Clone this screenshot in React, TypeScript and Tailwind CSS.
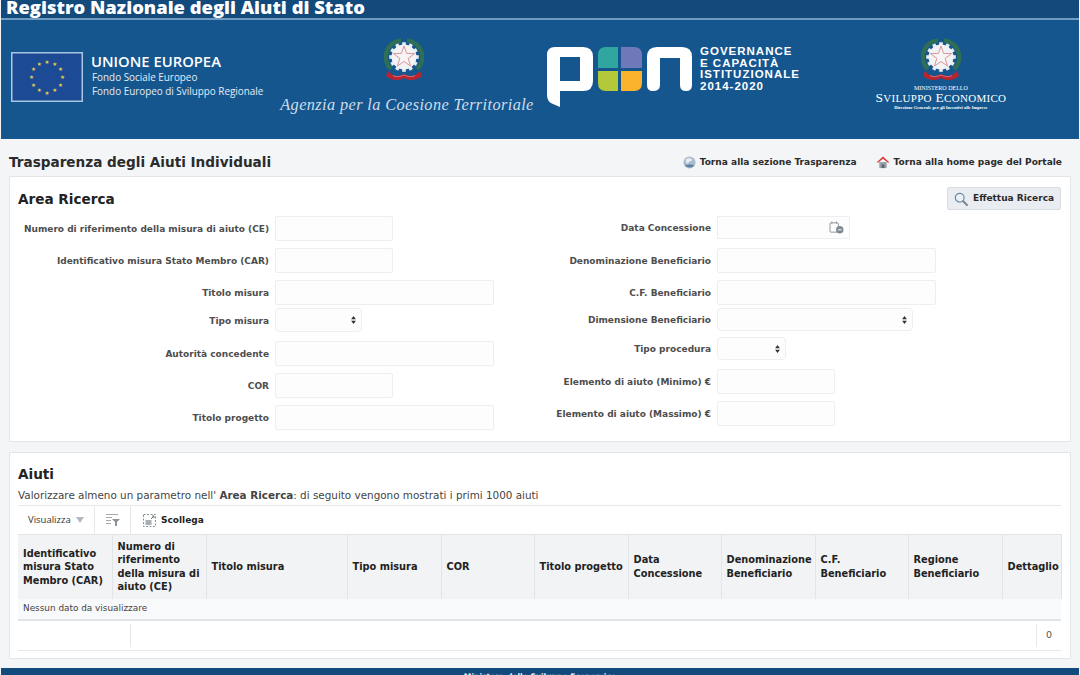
import React from 'react';

const verdana = "font-['DejaVu_Sans',sans-serif]";

function Emblem({ className }: { className: string }) {
  const teeth = Array.from({ length: 12 }, (_, i) => i * 30);
  return (
    <svg viewBox="0 0 40 46" className={className}>
      <path d="M17 2.5 A16.5 16.5 0 0 0 7 31" fill="none" stroke="#2e6f55" strokeWidth="4.5" />
      <path d="M23 2.5 A16.5 16.5 0 0 1 33 31" fill="none" stroke="#2e6f55" strokeWidth="4.5" />
      {teeth.map((a) => (
        <rect key={a} x="18.2" y="4.2" width="3.6" height="3.2" fill="#e6ebee" transform={`rotate(${a} 20 19)`} />
      ))}
      <circle cx="20" cy="19" r="12.5" fill="#f1f3f4" />
      <polygon
        points="20,8 22.6,15.4 30.5,15.6 24.2,20.4 26.5,28 20,23.5 13.5,28 15.8,20.4 9.5,15.6 17.4,15.4"
        fill="#f6f4f4"
        stroke="#d98a92"
        strokeWidth="0.9"
      />
      <path d="M4 33 C9 39 15 39 20 36 C25 39 31 39 36 33 L38 38 C32 43 25 43 20 40 C15 43 8 43 2 38 Z" fill="#b8242f" />
      <path d="M9 37.5 C13 39.5 16 38.5 20 37 C24 38.5 27 39.5 31 37.5" fill="none" stroke="#e9a0a0" strokeWidth="0.6" />
    </svg>
  );
}

function EuFlag() {
  const stars = Array.from({ length: 12 }, (_, i) => {
    const a = (i * Math.PI) / 6;
    return { x: 36 + 15.5 * Math.sin(a), y: 25 - 15.5 * Math.cos(a), key: i };
  });
  return (
    <svg viewBox="0 0 72 50" className="w-[72px] h-[50px] shrink-0">
      <rect x="0.75" y="0.75" width="70.5" height="48.5" fill="#1d4a94" stroke="#a9c6e3" strokeWidth="1.5" />
      {stars.map((s) => (
        <text key={s.key} x={s.x} y={s.y + 2} textAnchor="middle" fontSize="5.5" fill="#e8d24a" fontFamily="DejaVu Sans">
          ★
        </text>
      ))}
    </svg>
  );
}

function PonLogo() {
  return (
    <svg viewBox="0 0 146 60" className="w-[146px] h-[60px] shrink-0">
      <path
        d="M8 0 H36 Q46 0 46 10 V34 Q46 44 36 44 H13 V60 L6 57 Q0 55 0 48 V8 Q0 0 8 0 Z M13 10 V34 H33 V10 Z"
        fill="#fff"
        fillRule="evenodd"
      />
      <path d="M51 22 V8 Q51 0 59 0 H71 V21 H51 Z" fill="#2fa6a0" />
      <path d="M74 0 H87 Q95 0 95 8 V21 H74 Z" fill="#6f78b8" />
      <path d="M51 24 H71 V44 H59 Q51 44 51 36 Z" fill="#b3c93a" />
      <path d="M74 24 H95 V36 Q95 44 87 44 H74 Z" fill="#fbb32d" />
      <path
        d="M100 38 V10 Q100 0 110 0 H135 Q145 0 145 10 V38 Q145 44 139 44 Q133 44 133 38 V11 H113 V38 Q113 44 106 44 Q100 44 100 38 Z"
        fill="#fff"
      />
    </svg>
  );
}

function Field({ label, inputClass, rowClass }: { label: string; inputClass: string; rowClass: string }) {
  return (
    <div className={`flex items-center ${rowClass}`}>
      <label className="w-[251px] shrink-0 pr-[6px] pt-[1px] text-right text-[9px] font-bold leading-none text-[#4d4d4d] whitespace-nowrap">
        {label}
      </label>
      <input className={`h-full shrink-0 bg-[#fdfdfe] border border-[#eceef1] rounded-[2px] ${inputClass}`} />
    </div>
  );
}

function SelectField({ label, selectClass, rowClass }: { label: string; selectClass: string; rowClass: string }) {
  return (
    <div className={`flex items-center ${rowClass}`}>
      <label className="w-[251px] shrink-0 pr-[6px] pt-[2px] text-right text-[9px] font-bold leading-none text-[#4d4d4d] whitespace-nowrap">
        {label}
      </label>
      <div className={`h-full flex items-center justify-end pr-[5px] bg-[#fdfdfe] border border-[#eceef1] rounded-[4px] ${selectClass}`}>
        <svg viewBox="0 0 6 10" className="w-[5px] h-[8px]">
          <path d="M3 0 L6 4 H0 Z M0 6 H6 L3 10 Z" fill="#333" />
        </svg>
      </div>
    </div>
  );
}

const headers = [
  { text: 'Identificativo misura Stato Membro (CAR)', w: 'w-[94px]' },
  { text: 'Numero di riferimento della misura di aiuto (CE)', w: 'w-[94px]' },
  { text: 'Titolo misura', w: 'w-[141px]' },
  { text: 'Tipo misura', w: 'w-[94px]' },
  { text: 'COR', w: 'w-[93px]' },
  { text: 'Titolo progetto', w: 'w-[94px]' },
  { text: 'Data Concessione', w: 'w-[93px]' },
  { text: 'Denominazione Beneficiario', w: 'w-[94px]' },
  { text: 'C.F. Beneficiario', w: 'w-[93px]' },
  { text: 'Regione Beneficiario', w: 'w-[94px]' },
  { text: 'Dettaglio', w: 'w-[59px]' },
];

export default function App() {
  return (
    <div className={`h-[675px] overflow-hidden bg-[#f4f5f6] px-[1px] text-[#222] ${verdana}`}>
      {/* barra titolo */}
      <div className="h-[20px] bg-[#134a7c] border-b-2 border-[#6f9cc0] overflow-hidden pl-[5px]">
        <div className="font-['Open_Sans',sans-serif] font-extrabold text-[18.4px] leading-[13px] text-white whitespace-nowrap">
          Registro Nazionale degli Aiuti di Stato
        </div>
      </div>

      {/* loghi */}
      <div className="h-[119px] bg-[#15568f] flex items-start pl-[10px]">
        <div className="mt-[32px]">
          <EuFlag />
        </div>
        <div className="ml-[8px] mt-[32px] w-[188px] font-['Open_Sans',sans-serif] text-white">
          <div className="text-[14.8px] font-semibold leading-[18px]">UNIONE EUROPEA</div>
          <div className="pl-[1px] mt-[1px] text-[9.9px] leading-[13.5px] text-[#e4edf5]">Fondo Sociale Europeo</div>
          <div className="pl-[1px] text-[9.9px] leading-[13.5px] text-[#e4edf5]">Fondo Europeo di Sviluppo Regionale</div>
        </div>
        <div className="w-[256px] flex flex-col items-center mt-[18px]">
          <Emblem className="w-[40px] h-[46px] ml-[-6px]" />
          <div className="mt-[11px] font-['Liberation_Serif',serif] italic text-[16.3px] leading-[20px] tracking-[0.4px] text-[#cfdde9] whitespace-nowrap">
            Agenzia per la Coesione Territoriale
          </div>
        </div>
        <div className="ml-[12px] mt-[27px]">
          <PonLogo />
        </div>
        <div className="ml-[7px] mt-[26px] font-['Liberation_Sans',sans-serif] font-bold text-[11.5px] leading-[11.5px] tracking-[1px] text-white whitespace-nowrap">
          <div>GOVERNANCE</div>
          <div>E CAPACITÀ</div>
          <div>ISTITUZIONALE</div>
          <div>2014-2020</div>
        </div>
        <div className="w-[132px] ml-[75px] mt-[18px] flex flex-col items-center font-['Liberation_Serif',serif] text-white">
          <Emblem className="w-[40px] h-[46px]" />
          <div className="text-[6px] leading-[6px] mt-[1px] whitespace-nowrap">MINISTERO DELLO</div>
          <div className="text-[13.5px] leading-[14px] tracking-[0.3px] whitespace-nowrap">
            S<span className="text-[11px]">VILUPPO</span> E<span className="text-[11px]">CONOMICO</span>
          </div>
          <div className="text-[4.5px] leading-[6px] font-bold whitespace-nowrap">
            Direzione Generale per gli Incentivi alle Imprese
          </div>
        </div>
      </div>

      {/* titolo pagina */}
      <div className="h-[37px] flex items-center justify-between pl-[8px] pr-[17px] pt-[10px]">
        <h1 className="text-[13.6px] font-bold leading-none text-[#2b2b2b]">Trasparenza degli Aiuti Individuali</h1>
        <div className="flex items-center text-[9.05px] font-bold text-[#2b2b2b]">
          <svg viewBox="0 0 14 14" className="w-[13px] h-[13px]">
            <circle cx="7" cy="7" r="6.5" fill="#a9bccf" />
            <path d="M3 4 C5 2 8 2 10 4 C9 6 7 5 6 7 C5 9 3 8 3 4 Z" fill="#e6ecf1" />
            <path d="M2 10 C5 13 10 13 12 10 C10 9 5 9 2 10 Z" fill="#5f80a3" />
          </svg>
          <span className="ml-[4px]">Torna alla sezione Trasparenza</span>
          <svg viewBox="0 0 14 14" className="ml-[19px] w-[14px] h-[13px]">
            <rect x="3" y="6.5" width="8" height="6.5" fill="#9aa3ab" />
            <rect x="5.5" y="9" width="3" height="4" fill="#5f676e" />
            <path d="M7 0.5 L14 7 H12 L7 3 L2 7 H0 Z" fill="#d8392e" />
          </svg>
          <span className="ml-[4px]">Torna alla home page del Portale</span>
        </div>
      </div>

      {/* area ricerca */}
      <section className="relative mx-[8px] h-[266px] bg-white border border-[#e3e6e9]">
        <div className="flex items-center justify-between h-[33px] pl-[8px] pr-[9px] pt-[9px]">
          <h2 className="text-[13.6px] font-bold leading-none text-[#222] pt-[4px]">Area Ricerca</h2>
          <button className="w-[114px] h-[23px] mt-[1px] flex items-center pl-[6px] bg-[#e9edf1] border border-[#d9dee3] rounded-[2px] text-[9px] font-bold text-[#2b2b2b]">
            <svg viewBox="0 0 16 16" className="w-[14px] h-[14px]">
              <circle cx="6.5" cy="6.5" r="5" fill="#eaf1f7" stroke="#6f8ba3" strokeWidth="1.4" />
              <path d="M10.5 10.5 L15 15" stroke="#7b8790" strokeWidth="2.4" strokeLinecap="round" />
            </svg>
            <span className="ml-[5px] pt-[1px]">Effettua Ricerca</span>
          </button>
        </div>

        <div className="flex mt-[6px]">
          <div className="w-[442px] pl-[14px]">
            <Field label="Numero di riferimento della misura di aiuto (CE)" inputClass="w-[118px]" rowClass="h-[25px]" />
            <Field label="Identificativo misura Stato Membro (CAR)" inputClass="w-[118px]" rowClass="h-[25px] mt-[7px]" />
            <Field label="Titolo misura" inputClass="w-[219px]" rowClass="h-[25px] mt-[7px]" />
            <SelectField label="Tipo misura" selectClass="w-[87px]" rowClass="h-[24px] mt-[3px]" />
            <Field label="Autorità concedente" inputClass="w-[219px]" rowClass="h-[25px] mt-[9px]" />
            <Field label="COR" inputClass="w-[118px]" rowClass="h-[25px] mt-[7px]" />
            <Field label="Titolo progetto" inputClass="w-[219px]" rowClass="h-[25px] mt-[7px]" />
          </div>
          <div className="pl-[14px]">
            <div className="flex items-center h-[23px]">
              <label className="w-[251px] pr-[6px] pt-[1px] text-right text-[9px] font-bold leading-none text-[#4d4d4d]">
                Data Concessione
              </label>
              <div className="w-[133px] h-full flex items-center justify-end pr-[5px] bg-[#fdfdfe] border border-[#eceef1]">
                <svg viewBox="0 0 16 14" className="w-[15px] h-[13px]">
                  <rect x="1" y="2" width="9" height="10" rx="1" fill="none" stroke="#8a9299" strokeWidth="1" />
                  <path d="M3 0.5 V3 M8 0.5 V3" stroke="#8a9299" />
                  <circle cx="11.5" cy="9.5" r="4" fill="#7f8b94" />
                  <path d="M9.5 9.5 H13.5" stroke="#fff" />
                </svg>
              </div>
            </div>
            <Field label="Denominazione Beneficiario" inputClass="w-[219px]" rowClass="h-[25px] mt-[9px]" />
            <Field label="C.F. Beneficiario" inputClass="w-[219px]" rowClass="h-[25px] mt-[7px]" />
            <SelectField label="Dimensione Beneficiario" selectClass="w-[196px]" rowClass="h-[23px] mt-[3px]" />
            <SelectField label="Tipo procedura" selectClass="w-[69px]" rowClass="h-[23px] mt-[6px]" />
            <Field label="Elemento di aiuto (Minimo) €" inputClass="w-[118px]" rowClass="h-[25px] mt-[9px]" />
            <Field label="Elemento di aiuto (Massimo) €" inputClass="w-[118px]" rowClass="h-[25px] mt-[7px]" />
          </div>
        </div>
      </section>

      {/* aiuti */}
      <section className="mx-[8px] mt-[10px] h-[207px] bg-white border border-[#e3e6e9] pl-[8px] pr-[9px]">
        <h2 className="mt-[13px] text-[13.6px] font-bold leading-[16px] text-[#222]">Aiuti</h2>
        <p className="mt-[6px] h-[18px] border-b border-[#e6e8ea] text-[10.4px] leading-[14px] text-[#444] whitespace-nowrap">
          Valorizzare almeno un parametro nell' <b>Area Ricerca</b>: di seguito vengono mostrati i primi 1000 aiuti
        </p>

        <div className="h-[28px] flex items-center">
          <div className="w-[77px] h-full flex items-center pl-[10px] border-r border-[#e6e8ea] font-['Open_Sans',sans-serif] text-[9.5px] text-[#333]">
            Visualizza
            <span className="ml-[5px] w-0 h-0 border-x-[4px] border-x-transparent border-t-[6px] border-t-[#b5b9bd]" />
          </div>
          <div className="w-[36px] h-full flex items-center justify-center border-r border-[#e6e8ea]">
            <svg viewBox="0 0 14 12" className="w-[14px] h-[12px]">
              <path d="M0 0.5 H12 M0 3.5 H6 M0 6.5 H5 M0 9.5 H5" stroke="#a3abb1" strokeWidth="1.2" />
              <path d="M6 5 H14 L11 8 V12 H9 V8 Z" fill="#8b949b" />
            </svg>
          </div>
          <svg viewBox="0 0 13 13" className="ml-[12px] w-[13px] h-[13px]">
            <rect x="0.5" y="0.5" width="12" height="12" fill="none" stroke="#8b949b" strokeDasharray="2 1.5" />
            <rect x="2.5" y="6" width="6" height="5" fill="#a7afb5" />
            <path d="M8 5 L11 2 M9 2 H11 V4" stroke="#6d767d" fill="none" />
          </svg>
          <span className="ml-[5px] pt-[2px] text-[9px] font-bold text-[#222]">Scollega</span>
        </div>

        <table className="w-[1043px] table-fixed border-collapse">
          <thead>
            <tr className="h-[64px] bg-[#f1f3f5]">
              {headers.map((h) => (
                <th
                  key={h.text}
                  className={`${h.w} pl-[5px] pr-[1px] border-r border-t border-[#e2e5e8] text-left align-middle text-[9.8px] font-bold leading-[13.5px] text-[#222]`}
                >
                  {h.text}
                </th>
              ))}
            </tr>
          </thead>
          <tbody>
            <tr className="h-[21px] bg-[#f8f9fa] border-b-2 border-[#e2e5e8]">
              <td colSpan={11} className="px-[5px] text-[8.9px] leading-none text-[#444]">
                Nessun dato da visualizzare
              </td>
            </tr>
          </tbody>
        </table>

        <div className="h-[30px] flex items-center border-b border-[#e6e8ea] text-[9.5px] text-[#555]">
          <div className="w-[113px] h-[23px] border-r border-[#e6e8ea]" />
          <div className="flex-1" />
          <div className="w-[25px] h-[23px] flex items-center pl-[9px] border-l border-[#e6e8ea]">0</div>
        </div>
      </section>

      {/* footer */}
      <div className="mt-[9px] h-[20px] pt-[3px] bg-[#134a7c] text-center overflow-hidden text-[7.6px] font-bold leading-[12px] text-white">
        Ministero dello Sviluppo Economico
      </div>
    </div>
  );
}
